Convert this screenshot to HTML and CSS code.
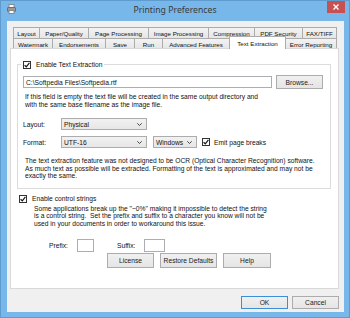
FILE: index.html
```html
<!DOCTYPE html>
<html>
<head>
<meta charset="utf-8">
<title>Printing Preferences</title>
<link rel="stylesheet" href="styles.css">
</head>
<body>
<div class="window">
  <div class="titlebar">
    <svg class="appicon" width="9" height="10" viewBox="0 0 9 10">
      <rect x="2" y="0.5" width="5" height="3" fill="#fff" stroke="#8a8a8a" stroke-width="1"/>
      <rect x="0.5" y="3.5" width="8" height="4" rx="0.5" fill="#9a9a9a" stroke="#707070" stroke-width="1"/>
      <rect x="2" y="6.5" width="5" height="3" fill="#fff" stroke="#8a8a8a" stroke-width="1"/>
    </svg>
    <div class="title">Printing Preferences</div>
    <div class="close">
      <svg width="6" height="6" viewBox="0 0 6 6"><path d="M0.5 0.5 L5.5 5.5 M5.5 0.5 L0.5 5.5" stroke="#fff" stroke-width="1.4"/></svg>
    </div>
  </div>
  <div class="client">
    <div class="tabs">
      <div class="tabrow back">
        <div class="tab">Layout</div>
        <div class="tab">Paper/Quality</div>
        <div class="tab">Page Processing</div>
        <div class="tab">Image Processing</div>
        <div class="tab">Compression</div>
        <div class="tab">PDF Security</div>
        <div class="tab">FAX/TIFF</div>
      </div>
      <div class="tabrow front">
        <div class="tab">Watermark</div>
        <div class="tab">Endorsements</div>
        <div class="tab">Save</div>
        <div class="tab">Run</div>
        <div class="tab">Advanced Features</div>
        <div class="tab selected">Text Extraction</div>
        <div class="tab">Error Reporting</div>
      </div>
    </div>
    <div class="panel">
      <div class="group">
        <div class="legend">
          <span class="check"><svg width="6" height="6" viewBox="0 0 6 6"><path d="M0.6 3.2 L2.3 4.8 L5.4 0.9" fill="none" stroke="#1a1a1a" stroke-width="1.2"/></svg></span>
          <span>Enable Text Extraction</span>
        </div>
        <div class="pathrow">
          <div class="input">C:\Softpedia Files\Softpedia.rtf</div>
          <div class="btn browse">Browse...</div>
        </div>
        <p class="help">If this field is empty the text file will be created in the same output directory and<br>with the same base filename as the image file.</p>
        <div class="field layout-row">
          <span class="label">Layout:</span>
          <div class="select wide"><span>Physical</span><svg class="chev" width="5" height="3" viewBox="0 0 5 3"><path d="M0.3 0.3 L2.5 2.5 L4.7 0.3" fill="none" stroke="#333" stroke-width="0.9"/></svg></div>
        </div>
        <div class="field format-row">
          <span class="label">Format:</span>
          <div class="select wide"><span>UTF-16</span><svg class="chev" width="5" height="3" viewBox="0 0 5 3"><path d="M0.3 0.3 L2.5 2.5 L4.7 0.3" fill="none" stroke="#333" stroke-width="0.9"/></svg></div>
          <div class="select narrow"><span>Windows</span><svg class="chev" width="5" height="3" viewBox="0 0 5 3"><path d="M0.3 0.3 L2.5 2.5 L4.7 0.3" fill="none" stroke="#333" stroke-width="0.9"/></svg></div>
          <span class="check emit"><svg width="6" height="6" viewBox="0 0 6 6"><path d="M0.6 3.2 L2.3 4.8 L5.4 0.9" fill="none" stroke="#1a1a1a" stroke-width="1.2"/></svg></span>
          <span>Emit page breaks</span>
        </div>
        <p class="note">The text extraction feature was not designed to be OCR (Optical Character Recognition) software.<br>As much text as possible will be extracted. Formatting of the text is approximated and may not be<br>exactly the same.</p>
      </div>
      <div class="ctlrow">
        <span class="check"><svg width="6" height="6" viewBox="0 0 6 6"><path d="M0.6 3.2 L2.3 4.8 L5.4 0.9" fill="none" stroke="#1a1a1a" stroke-width="1.2"/></svg></span>
        <span>Enable control strings</span>
      </div>
      <p class="ctlnote">Some applications break up the "~0%" making it impossible to detect the string<br>is a control string.&nbsp; Set the prefix and suffix to a character you know will not be<br>used in your documents in order to workaround this issue.</p>
      <div class="affixrow">
        <span class="plabel">Prefix:</span>
        <div class="box pbox"></div>
        <span class="slabel">Suffix:</span>
        <div class="box sbox"></div>
      </div>
      <div class="actions">
        <div class="btn license">License</div>
        <div class="btn restore">Restore Defaults</div>
        <div class="btn help-btn">Help</div>
      </div>
    </div>
    <div class="footer">
      <div class="btn ok">OK</div>
      <div class="btn cancel">Cancel</div>
    </div>
  </div>
</div>
</body>
</html>
```
FILE: styles.css
```css
* { box-sizing: border-box; }
html, body { margin: 0; padding: 0; }
body {
  width: 350px;
  height: 318px;
  overflow: hidden;
  font-family: "Liberation Sans", Arial, sans-serif;
  font-size: 6.7px;
  color: #111;
  background: #77b6e9;
}
p { margin: 0; }

.window {
  width: 350px;
  height: 318px;
  background: #78b7ea;
  border: 1px solid #5f9bcf;
  display: flex;
  flex-direction: column;
}

.titlebar {
  height: 20px;
  flex: none;
  display: grid;
  grid-template-columns: 1fr auto 1fr;
  align-items: start;
}
.appicon { margin: 3px 0 0 6px; justify-self: start; }
.title {
  font-family: "Noto Sans", "Liberation Sans", sans-serif;
  font-size: 8.7px;
  color: #3a3a3a;
  line-height: 12px;
  margin-top: 3px;
}
.close {
  justify-self: end;
  width: 18px;
  height: 12px;
  margin-right: 4px;
  background: #c75050;
  display: flex;
  align-items: center;
  justify-content: center;
}

.client {
  flex: 1;
  margin: 0 5px 5px 6px;
  background: #f0f0f0;
  padding: 6px 5px 0 3px;
  display: flex;
  flex-direction: column;
}

.tabs { margin-left: 3px; width: 324px; display: flex; flex-direction: column; font-size: 6.2px; }
.tabrow { display: flex; }
.tabrow.back { height: 11px; }
.tabrow.front { height: 10px; }
.tab {
  flex: none;
  border-left: 1px solid #acacac;
  border-top: 1px solid #acacac;
  background: linear-gradient(#f3f3f3, #e6e6e6);
  display: flex;
  align-items: center;
  justify-content: center;
  white-space: nowrap;
  padding-top: 1px;
}
.tab:last-child { border-right: 1px solid #acacac; }
.tab.selected + .tab { border-left: none; }
.tab.selected {
  background: #fff;
  border-right: 1px solid #acacac;
  height: 13px;
  margin-top: -2px;
  margin-bottom: -1px;
  z-index: 1;
  padding-top: 0;
}

.back .tab:nth-child(1) { width: 26px; }
.back .tab:nth-child(2) { width: 49px; }
.back .tab:nth-child(3) { width: 60px; }
.back .tab:nth-child(4) { width: 60px; }
.back .tab:nth-child(5) { width: 46px; }
.back .tab:nth-child(6) { width: 48px; }
.back .tab:nth-child(7) { width: 35px; }
.front .tab:nth-child(1) { width: 39px; }
.front .tab:nth-child(2) { width: 53px; }
.front .tab:nth-child(3) { width: 29px; }
.front .tab:nth-child(4) { width: 28px; }
.front .tab:nth-child(5) { width: 67px; }
.front .tab:nth-child(6) { width: 57px; }
.front .tab:nth-child(7) { width: 51px; }

.panel {
  flex: none;
  height: 241px;
  background: #fff;
  border: 1px solid #d9d9d9;
  display: flex;
  flex-direction: column;
  align-items: flex-start;
}

.group {
  align-self: stretch;
  margin: 15px 7px 0 6px;
  border: 1px solid #dcdcdc;
  padding: 0 6px 8px 0;
  display: flex;
  flex-direction: column;
  align-items: flex-start;
}
.legend {
  margin: -5px 0 0 3px;
  padding: 0 2px;
  height: 9px;
  background: #fff;
  display: flex;
  align-items: center;
  gap: 5px;
}
.check {
  width: 8px;
  height: 8px;
  border: 1px solid #333;
  background: #fff;
  display: flex;
  align-items: center;
  justify-content: center;
  flex: none;
}

.pathrow {
  margin: 6px 0 0 5px;
  height: 14px;
  display: flex;
  align-items: center;
  gap: 4px;
}
.input {
  width: 249px;
  height: 12px;
  border: 1px solid #abadb3;
  padding-left: 2px;
  display: flex;
  align-items: center;
}
.btn {
  border: 1px solid #acacac;
  background: linear-gradient(#f0f0f0, #e5e5e5);
  display: flex;
  align-items: center;
  justify-content: center;
  color: #1a1a1a;
  white-space: nowrap;
}
.browse { width: 47px; height: 14px; }

.help { margin: 4px 0 0 7px; line-height: 7.5px; }

.field {
  margin-left: 5px;
  height: 12px;
  display: flex;
  align-items: center;
}
.layout-row { margin-top: 10px; }
.format-row { margin-top: 6px; }
.label { width: 38px; }
.select {
  height: 12px;
  border: 1px solid #acacac;
  background: linear-gradient(#f2f2f2, #e6e6e6);
  display: flex;
  align-items: center;
  justify-content: space-between;
  padding: 0 4px 0 2px;
}
.select.wide { width: 86px; }
.select.narrow { width: 44px; margin-left: 6px; }
.check.emit { margin: 0 4px 0 5px; }

.note { margin: 9px 0 0 7px; line-height: 7.5px; }

.ctlrow {
  margin: 6px 0 0 8px;
  height: 8px;
  display: flex;
  align-items: center;
  gap: 5px;
}
.ctlnote { margin: 2px 0 0 23px; line-height: 7.5px; }

.affixrow {
  margin: 12px 0 0 38px;
  height: 13px;
  display: flex;
  align-items: center;
}
.box { height: 13px; border: 1px solid #abadb3; background: #fff; }
.pbox { width: 17px; margin-left: 9px; }
.slabel { margin-left: 23px; }
.sbox { width: 21px; margin-left: 9px; }

.actions {
  margin: 1px 0 0 96px;
  display: flex;
  gap: 6px;
}
.actions .btn { height: 15px; }
.license { width: 47px; }
.restore { width: 57px; }
.help-btn { width: 48px; }

.footer {
  margin-top: 7px;
  display: flex;
  justify-content: flex-end;
  gap: 4px;
}
.footer .btn { width: 47px; height: 13px; }
.ok { border-color: #3c8fd6; }
```
